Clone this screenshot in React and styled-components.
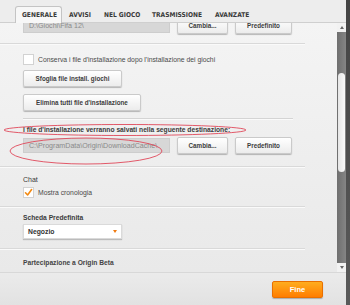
import React from "react";
import styled, { createGlobalStyle } from "styled-components";

const Global = createGlobalStyle`
  html, body { margin: 0; padding: 0; background: #3a3a3a; }
  body { font-family: "Liberation Sans", Arial, sans-serif; }
  * { box-sizing: border-box; }
`;

const Window = styled.div`
  width: 350px;
  height: 305px;
  display: flex;
  overflow: hidden;
  background: #f0f0f0;
`;

const Main = styled.div`
  flex: 1;
  display: flex;
  flex-direction: column;
  min-width: 0;
`;

const EdgeStrip = styled.div`
  width: 4px;
  background: linear-gradient(#444, #5a5a5a);
`;

const TabBar = styled.div`
  height: 23px;
  display: flex;
  align-items: flex-end;
  padding-left: 15px;
  background: #ededed;
  border-bottom: 1px solid #cfcfcf;
  position: relative;
  z-index: 2;
`;

const Tab = styled.div`
  width: ${(p) => p.$w}px;
  flex: none;
  height: ${(p) => (p.$active ? "17px" : "16px")};
  padding-left: 6px;
  margin-bottom: ${(p) => (p.$active ? "-1px" : "0")};
  display: flex;
  align-items: center;
  font-family: "DejaVu Sans Condensed", "DejaVu Sans", sans-serif;
  font-weight: bold;
  font-size: 6.6px;
  color: #3a3a3a;
  white-space: nowrap;
  background: ${(p) => (p.$active ? "#f7f7f7" : "transparent")};
  border: ${(p) => (p.$active ? "1px solid #c4c4c4" : "1px solid transparent")};
  border-bottom: none;
  border-radius: 3px 3px 0 0;
`;

const Body = styled.div`
  flex: 1;
  display: flex;
  min-height: 0;
`;

const Viewport = styled.div`
  flex: 1;
  overflow: hidden;
  position: relative;
  background: linear-gradient(#f4f4f4, #e9e9e9);
`;

const Scrolled = styled.div`
  margin-top: -6px;
  width: 305px;
`;

const Section = styled.div`
  padding: ${(p) => p.$pad || "10px 0 10px 23px"};
  border-bottom: 1px solid #d9d9d9;
  box-shadow: 0 1px 0 #fafafa;
  display: flex;
  flex-direction: column;
  align-items: flex-start;
  gap: ${(p) => p.$gap || "0px"};
`;

const Spacer = styled.div`
  height: ${(p) => p.$h}px;
`;

const SubSep = styled.div`
  width: 270px;
  height: 1px;
  background: #d4d4d4;
  box-shadow: 0 1px 0 #fafafa;
`;

const Row = styled.div`
  display: flex;
  align-items: center;
  gap: ${(p) => p.$gap || "7px"};
`;

const PathField = styled.div`
  width: 147px;
  height: 15px;
  background: #d7d7d7;
  border: 1px solid #cdcdcd;
  color: #8a8a8a;
  font-size: 7.1px;
  display: flex;
  align-items: center;
  padding-left: 5px;
  white-space: nowrap;
  overflow: hidden;
`;

const Button = styled.div`
  height: 17px;
  width: ${(p) => p.$w}px;
  display: flex;
  align-items: center;
  justify-content: center;
  background: linear-gradient(#ffffff, #ececec);
  border: 1px solid #cacaca;
  border-radius: 2px;
  box-shadow: 0 1px 1px rgba(0, 0, 0, 0.25);
  font-weight: bold;
  font-size: 6.3px;
  color: #3c3c3c;
  white-space: nowrap;
`;

const Check = styled.div`
  width: 11px;
  height: 11px;
  background: #fff;
  border: 1px solid #d2d2d2;
  display: flex;
  align-items: center;
  justify-content: center;
`;

const Text = styled.span`
  font-size: 6.8px;
  color: #4a4a4a;
  white-space: nowrap;
`;

const Label = styled.div`
  font-size: ${(p) => p.$size || "6.7px"};
  font-weight: ${(p) => (p.$bold ? "bold" : "normal")};
  color: ${(p) => p.$color || "#3a3a3a"};
  white-space: nowrap;
`;

const Select = styled.div`
  width: 99px;
  height: 15px;
  background: #fff;
  border: 1px solid #dadada;
  box-shadow: 0 1px 1px rgba(0, 0, 0, 0.2);
  display: flex;
  align-items: center;
  justify-content: space-between;
  padding: 0 4px;
  font-weight: bold;
  font-size: 6.8px;
  color: #333;
`;

const Caret = styled.div`
  width: 0;
  height: 0;
  border-left: 2.5px solid transparent;
  border-right: 2.5px solid transparent;
  border-top: 3px solid #f07a10;
`;

const Annotations = styled.svg`
  position: absolute;
  left: 0;
  top: 0;
  pointer-events: none;
`;

const Scrollbar = styled.div`
  width: 9px;
  display: flex;
  flex-direction: column;
  background: #7b7b7b;
`;

const ScrollArrow = styled.div`
  height: 9px;
  background: #f2f2f2;
  display: flex;
  align-items: center;
  justify-content: center;
`;

const ArrowShape = styled.div`
  width: 0;
  height: 0;
  border-left: 2px solid transparent;
  border-right: 2px solid transparent;
  ${(p) => (p.$up ? "border-bottom: 3px solid #666;" : "border-top: 3px solid #666;")}
`;

const Track = styled.div`
  flex: 1;
  display: flex;
  flex-direction: column;
  padding: 41px 0 0 1px;
  background: linear-gradient(90deg, #6f6f6f, #858585);
`;

const Thumb = styled.div`
  width: 7px;
  height: 99px;
  border-radius: 4px;
  background: linear-gradient(90deg, #e6e6e6, #fafafa);
`;

const Footer = styled.div`
  height: 33px;
  display: flex;
  align-items: flex-start;
  justify-content: flex-end;
  padding: 8px 23px 0 0;
  background: linear-gradient(#ebebeb, #e2e2e2);
  border-top: 1px solid #d8d8d8;
`;

const PrimaryButton = styled.div`
  width: 51px;
  height: 17px;
  display: flex;
  align-items: center;
  justify-content: center;
  border-radius: 2px;
  background: linear-gradient(#ffad1f, #ff7d00);
  border: 1px solid #e97000;
  box-shadow: 0 1px 1px rgba(0, 0, 0, 0.25);
  color: #fff;
  font-weight: bold;
  font-size: 7.5px;
`;

function CheckMark() {
  return (
    <svg width="9" height="9" viewBox="0 0 9 9">
      <path d="M1.5 4.8 L3.6 7 L7.6 1.6" fill="none" stroke="#f28a14" strokeWidth="1.6" strokeLinecap="round" strokeLinejoin="round" />
    </svg>
  );
}

const tabs = [
  { label: "GENERALE", w: 47 },
  { label: "AVVISI", w: 35 },
  { label: "NEL GIOCO", w: 48 },
  { label: "TRASMISSIONE", w: 63 },
  { label: "AVANZATE", w: 50 },
];

export default function App() {
  return (
    <>
      <Global />
      <Window>
        <Main>
          <TabBar>
            {tabs.map((t, i) => (
              <Tab key={t.label} $w={t.w} $active={i === 0}>{t.label}</Tab>
            ))}
          </TabBar>
          <Body>
            <Viewport>
              <Scrolled>
                <Section $pad="0 0 9px 23px">
                  <Row>
                    <PathField>D:\Giochi\Fifa 12\</PathField>
                    <Button $w={51}>Cambia...</Button>
                    <Button $w={57}>Predefinito</Button>
                  </Row>
                </Section>
                <Section $pad="10px 0 12px 23px">
                  <Row $gap="4px">
                    <Check />
                    <Text>Conserva i file d'installazione dopo l'installazione dei giochi</Text>
                  </Row>
                  <Spacer $h={5} />
                  <Button $w={99}>Sfoglia file install. giochi</Button>
                  <Spacer $h={7} />
                  <Button $w={118}>Elimina tutti file d'installazione</Button>
                  <Spacer $h={7} />
                  <SubSep />
                  <Spacer $h={7} />
                  <Label $bold>I file d'installazione verranno salvati nella seguente destinazione:</Label>
                  <Spacer $h={4} />
                  <Row>
                    <PathField>C:\ProgramData\Origin\DownloadCache\</PathField>
                    <Button $w={51}>Cambia...</Button>
                    <Button $w={57}>Predefinito</Button>
                  </Row>
                </Section>
                <Section $pad="9px 0 8px 23px" $gap="4px">
                  <Label $size="7px">Chat</Label>
                  <Row $gap="4px">
                    <Check><CheckMark /></Check>
                    <Text>Mostra cronologia</Text>
                  </Row>
                </Section>
                <Section $pad="7px 0 9px 23px" $gap="3px">
                  <Label $bold>Scheda Predefinita</Label>
                  <Select>
                    <span>Negozio</span>
                    <Caret />
                  </Select>
                </Section>
                <Section $pad="10px 0 10px 23px">
                  <Label $bold $color="#444">Partecipazione a Origin Beta</Label>
                </Section>
              </Scrolled>
              <Annotations width="337" height="250" viewBox="0 0 337 250">
                <ellipse cx="125" cy="107" rx="121" ry="5.5" fill="none" stroke="#e0485a" strokeWidth="0.9" />
                <ellipse cx="86" cy="128" rx="76" ry="13" fill="none" stroke="#e0485a" strokeWidth="0.9" />
              </Annotations>
            </Viewport>
            <Scrollbar>
              <ScrollArrow><ArrowShape $up /></ScrollArrow>
              <Track><Thumb /></Track>
              <ScrollArrow><ArrowShape /></ScrollArrow>
            </Scrollbar>
          </Body>
          <Footer>
            <PrimaryButton>Fine</PrimaryButton>
          </Footer>
        </Main>
        <EdgeStrip />
      </Window>
    </>
  );
}
